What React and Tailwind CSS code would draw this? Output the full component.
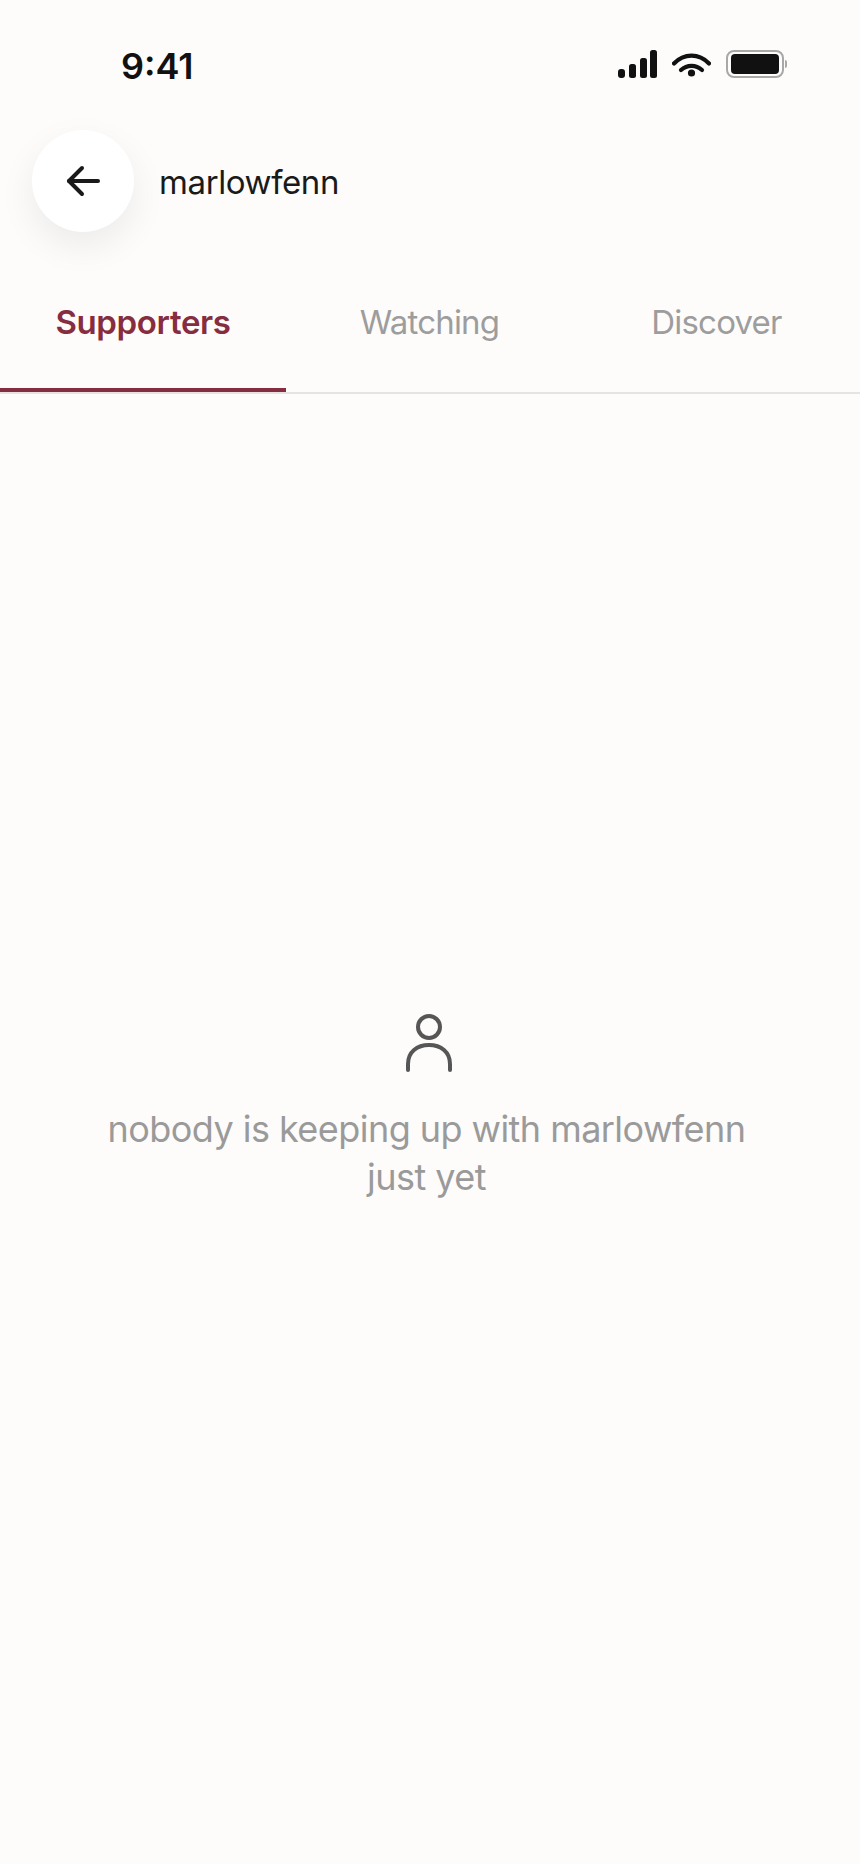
import React from 'react';

function StatusIcons() {
  return (
    <div className="flex items-center">
      {/* Signal */}
      <svg width="39" height="28" viewBox="0 0 39 28" className="text-[#111111]" fill="currentColor">
        <rect x="0" y="19" width="7" height="9" rx="3" />
        <rect x="11" y="14" width="7" height="14" rx="2.5" />
        <rect x="22" y="8" width="7" height="20" rx="2.5" />
        <rect x="32" y="0" width="7" height="28" rx="2.5" />
      </svg>
      {/* Wifi */}
      <svg width="39" height="26" viewBox="0 0 39 26" fill="none" className="ml-[15px] text-[#111111]">
        <path d="M2 12.5C12 2 27 2 37 12.5" stroke="currentColor" strokeWidth="4.2" strokeLinecap="round" />
        <path d="M9 19C15 13.5 24 13.5 30 19" stroke="currentColor" strokeWidth="4.2" strokeLinecap="round" />
        <circle cx="19.5" cy="22" r="3.6" fill="currentColor" />
      </svg>
      {/* Battery */}
      <div className="ml-[15px] flex items-center">
        <div className="flex h-[28px] w-[58px] items-center justify-center rounded-[8px] border-2 border-[#a8a8a8]">
          <div className="h-[20px] w-[48px] rounded-[4px] bg-[#111111]" />
        </div>
        <div className="ml-[1px] h-[8px] w-[2px] rounded-r-full bg-[#a8a8a8]" />
      </div>
    </div>
  );
}

function Tab({ label, active }) {
  return (
    <div
      className={
        active
          ? 'flex h-[160px] w-[286px] items-start justify-center border-b-4 border-[#862d3f] pt-[68px] text-[33px] leading-[44px] font-semibold tracking-[-0.35px] text-[#862d3f]'
          : 'flex h-[160px] w-[287px] items-start justify-center pt-[68px] text-[33px] leading-[44px] tracking-[-0.8px] text-[#9d9d9d]'
      }
    >
      {label}
    </div>
  );
}

export default function App() {
  return (
    <div className="flex min-h-[1864px] w-[860px] flex-col bg-[#fdfcfb] font-['Inter',sans-serif]">
      {/* Status bar */}
      <div className="flex h-[130px] items-start justify-between pt-[44px] pr-[73px] pl-[121px]">
        <span className="text-[36px] leading-[44px] font-semibold text-[#111111]">9:41</span>
        <div className="pt-[6px]">
          <StatusIcons />
        </div>
      </div>

      {/* Header */}
      <div className="flex items-center gap-[25px] pl-[32px]">
        <button className="flex h-[102px] w-[102px] items-center justify-center rounded-full bg-white shadow-[0_14px_36px_rgba(0,0,0,0.07)]">
          <svg width="36" height="32" viewBox="0 0 36 32" fill="none" stroke="#1a1a1a" strokeWidth="4" strokeLinecap="round" strokeLinejoin="round">
            <path d="M33 16H4" />
            <path d="M17 3L4 16L17 29" />
          </svg>
        </button>
        <span className="pt-[2px] text-[33px] leading-[44px] tracking-[-0.4px] text-[#1a1a1a]">marlowfenn</span>
      </div>

      {/* Tabs */}
      <div className="flex border-b-2 border-[#e6e4e2]">
        <Tab label="Supporters" active />
        <Tab label="Watching" />
        <Tab label="Discover" />
      </div>

      {/* Empty state */}
      <div className="flex flex-col items-center pt-[620px] pr-[7px]">
        <svg width="46" height="58" viewBox="0 0 46 58" fill="none" stroke="#565656" strokeWidth="4" strokeLinecap="round" className="ml-[4px]">
          <circle cx="23" cy="13" r="11" />
          <path d="M2 56V50C2 38 11 31 23 31C35 31 44 38 44 50V56" />
        </svg>
        <p className="mt-[33px] w-[700px] text-center text-[36px] leading-[48px] tracking-[-0.55px] text-[#9a9a9a]">
          nobody is keeping up with marlowfenn
          <br />
          just yet
        </p>
      </div>
    </div>
  );
}
